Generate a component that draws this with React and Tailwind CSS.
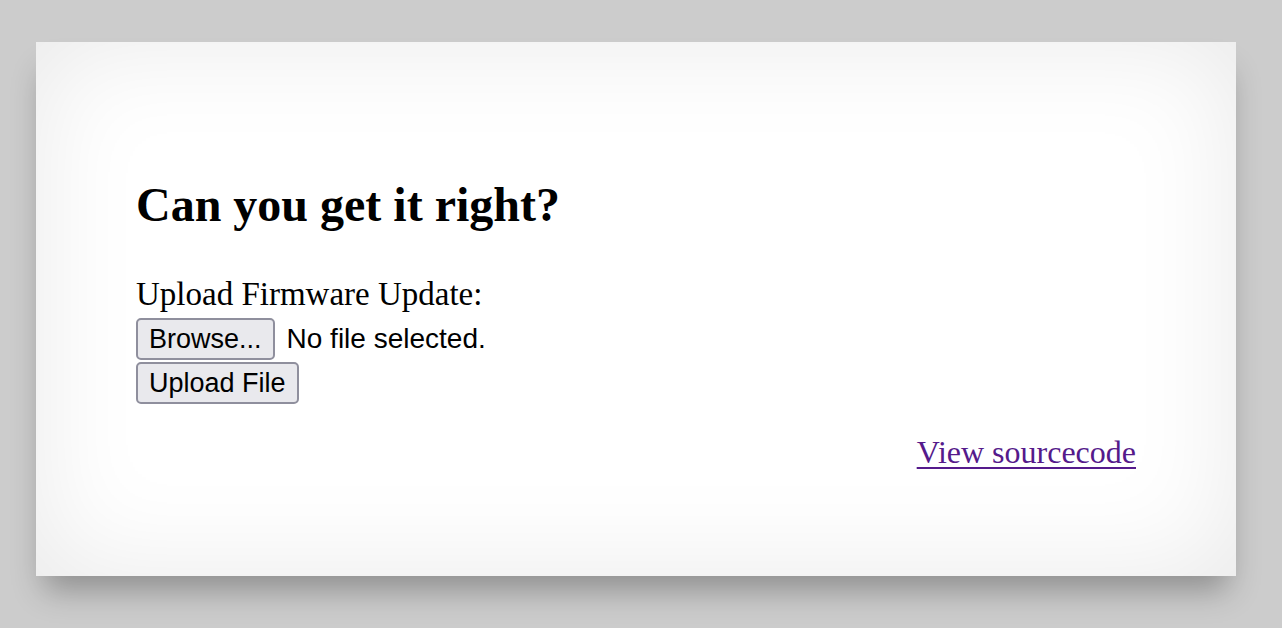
import React from "react";

const App = () => {
  return (
    <div className="min-h-[628px] w-full bg-[#cccccc] pl-[36px] pt-[42px]">
      <div className="h-[534px] w-[1200px] bg-white px-[100px] pt-[100px] shadow-[inset_0_0_110px_rgba(0,0,0,0.09),0_22px_30px_-8px_rgba(0,0,0,0.3)]">
        <div className="font-['Liberation_Serif',serif] text-black">
          <h1 className="mt-[33px] mb-[40px] text-[48px] font-bold leading-[60px]">Can you get it right?</h1>
          <form onSubmit={(e) => e.preventDefault()}>
            <div className="text-[33px] leading-[38px]">Upload Firmware Update:</div>
            <div className="mt-[5px] flex items-center gap-[12px] font-['Liberation_Sans',sans-serif]">
              <button
                type="button"
                className="h-[42px] rounded-[5px] border-2 border-[#8f8f9d] bg-[#e9e9ed] px-[11px] text-[27px] leading-none text-black"
              >
                Browse...
              </button>
              <span className="text-[28px]">No file selected.</span>
            </div>
            <div className="mt-[2px] font-['Liberation_Sans',sans-serif]">
              <button
                type="submit"
                className="h-[42px] rounded-[5px] border-2 border-[#8f8f9d] bg-[#e9e9ed] px-[11px] text-[27px] leading-none text-black"
              >
                Upload File
              </button>
            </div>
          </form>
          <div className="mt-[29px] text-right text-[32px] leading-[38px]">
            <a href="#" className="text-[#551a8b] underline decoration-[2px] underline-offset-[4px]">
              View sourcecode
            </a>
          </div>
        </div>
      </div>
    </div>
  );
};

export default App;
